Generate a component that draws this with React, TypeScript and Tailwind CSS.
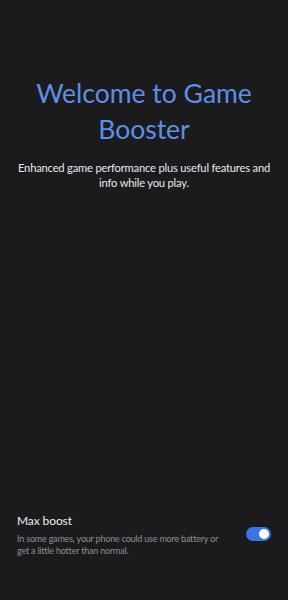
import React from "react";

export default function App() {
  return (
    <div
      className="w-[288px] h-[600px] bg-[#1b1b1d] flex flex-col justify-between"
      style={{ fontFamily: "Lato, 'Noto Sans', sans-serif" }}
    >
      <div className="flex flex-col items-center pt-[75px] px-4">
        <h1 className="text-[26.5px] leading-[36px] text-[#5f8ee6] text-center font-normal">
          Welcome to Game Booster
        </h1>
        <p className="mt-[13px] text-[11.2px] leading-[15px] tracking-[-0.2px] text-[#e8e8ea] text-center px-[2px]">
          Enhanced game performance plus useful features and info while you play.
        </p>
      </div>
      <div className="flex items-center pl-[17px] pr-[17px] pb-[43px]">
        <div className="flex-1 flex flex-col">
          <div className="text-[12px] leading-[16px] tracking-[-0.1px] text-[#eeeeee]">Max boost</div>
          <div className="text-[9px] leading-[12px] tracking-[-0.2px] text-[#8e8e92] mt-[4px] w-[210px]">
            In some games, your phone could use more battery or get a little hotter than normal.
          </div>
        </div>
        <div className="w-[25px] h-[14px] rounded-full bg-[#3e73e4] flex items-center justify-end pr-[2px] -mt-[2px]">
          <div className="w-[10px] h-[10px] rounded-full bg-white" />
        </div>
      </div>
    </div>
  );
}
